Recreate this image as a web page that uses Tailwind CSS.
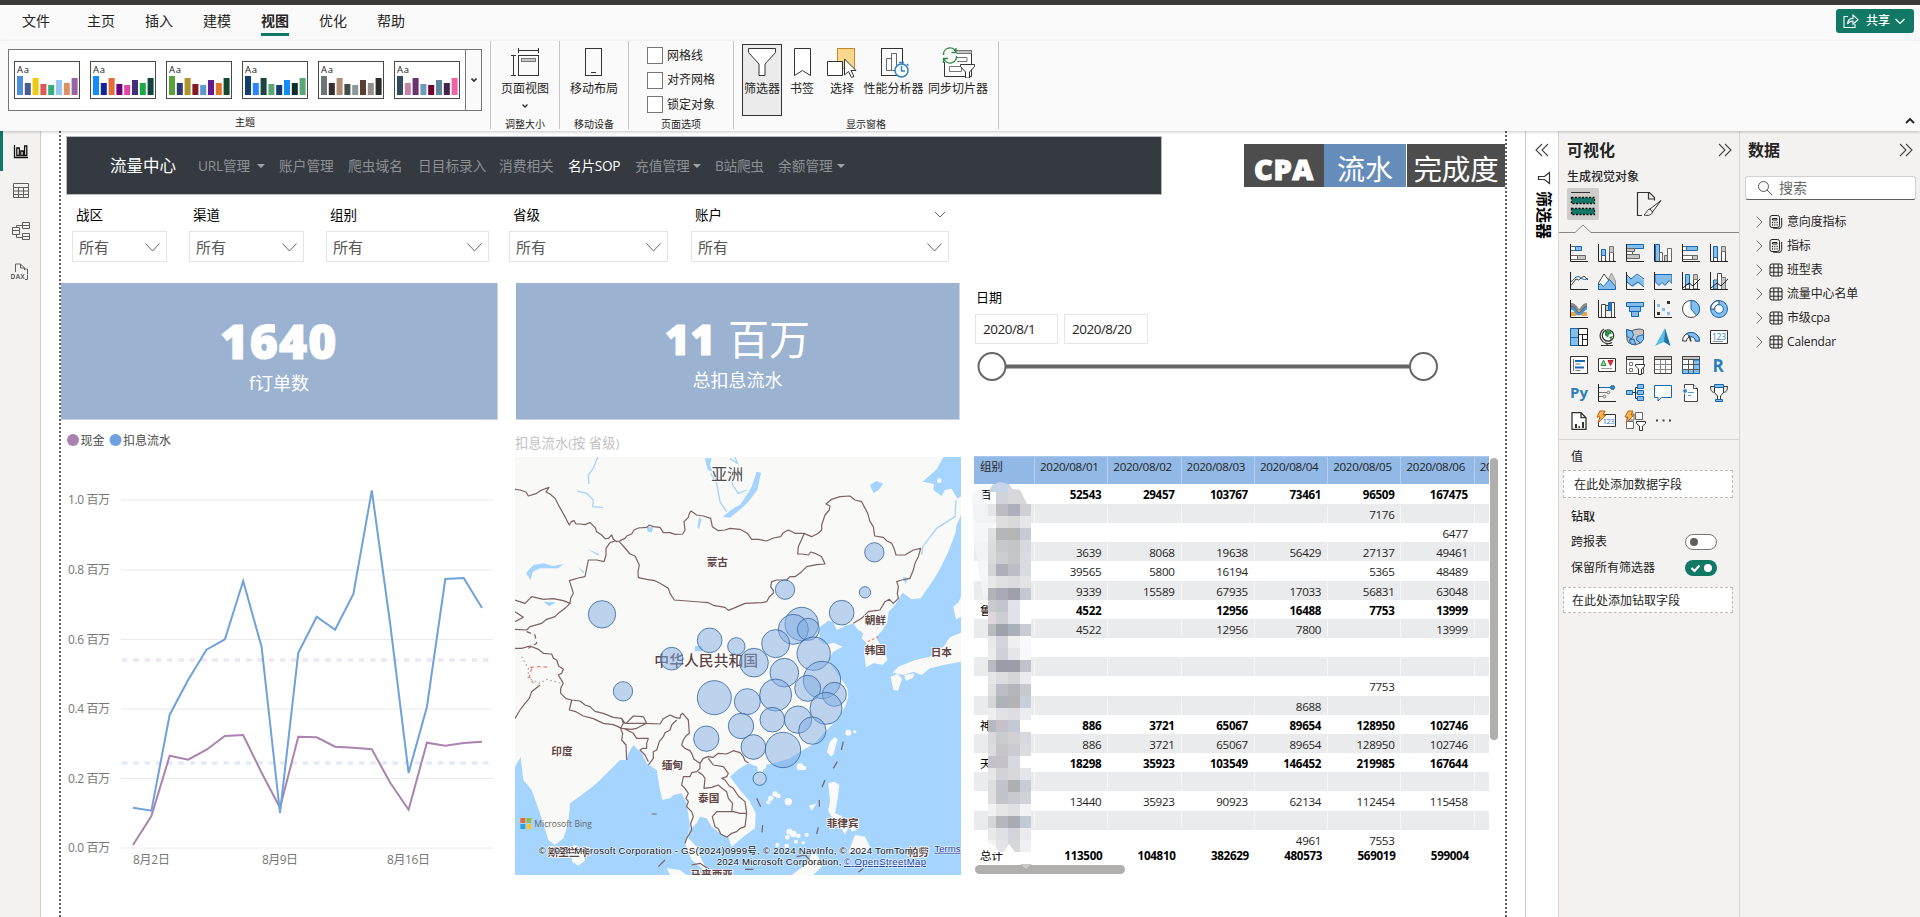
<!DOCTYPE html>
<html lang="zh-CN">
<head>
<meta charset="utf-8">
<title>流量中心</title>
<script src="https://cdn.jsdelivr.net/npm/@tailwindcss/browser@4"></script>
</head>
<body class="w-[1920px] h-[917px] overflow-hidden flex flex-col bg-white text-[#252423] font-['Open_Sans','Noto_Sans_CJK_SC',sans-serif]">
<div class="h-[5px] bg-[#3b3a38] shrink-0"></div>

<!-- menu tabs -->
<div class="h-9 shrink-0 bg-[#fafafa] flex items-start pl-[22px] pr-1.5 text-[14px] leading-[32px] whitespace-nowrap">
  <span class="w-[65px]">文件</span><span class="w-[58px]">主页</span><span class="w-[58px]">插入</span><span class="w-[58px]">建模</span>
  <span class="w-7 mr-[30px] font-bold h-[31px] leading-[32px] border-b-[3px] border-[#117865]">视图</span>
  <span class="w-[58px]">优化</span><span>帮助</span>
  <div class="ml-auto mt-1 w-[78px] h-6 rounded-[3px] bg-[#117865] text-white text-[12px] leading-6 font-medium flex items-center pl-[7px]">
    <svg class="w-4 h-4 mr-[7px]" viewBox="0 0 16 16" fill="none" stroke="#fff" stroke-width="1.1"><path d="M5 3.500H1v11h11v-3.500M4.500 11c.3-4 2-5.500 5.500-5.600V2l5 4.700-5 4.500V8C7.500 8 6 8.600 4.500 11z"/></svg>
    共享<svg class="w-2.5 h-2.5 ml-[5px]" viewBox="0 0 10 10" fill="none" stroke="#fff" stroke-width="1.2"><path d="M.5 3 5 7.500 9.500 3"/></svg>
  </div>
</div>

<!-- ribbon -->
<div class="h-[90px] shrink-0 bg-[#fafafa] flex text-[12px] leading-4 whitespace-nowrap relative z-10 shadow-[0_1px_3px_rgba(0,0,0,0.22)]">
  <div class="w-[491px] h-[88px] border-r border-[#c8c6c4] pl-2 pt-2 flex flex-col">
    <div class="w-[474px] h-[62px] border border-[#767676] bg-white flex">
      <svg id="themes" class="w-[456px] h-[60px]" viewBox="9 50 456 60"></svg>
      <div class="w-4 bg-[#fafafa] border-l border-[#767676] flex items-center justify-center"><svg class="w-1.5 h-1.5" viewBox="0 0 6 6" fill="none" stroke="#333" stroke-width="1.600"><path d="M.5 1.500 3 4l2.500-2.500"/></svg></div>
    </div>
    <div class="text-[10px] leading-3 w-[474px] text-center mt-[5px]">主题</div>
  </div>
  <div class="w-[69px] h-[88px] border-r border-[#c8c6c4] flex flex-col items-center pt-[7px]">
    <svg class="w-7 h-7 shrink-0" viewBox="0 0 28 28" fill="none" stroke="#333" stroke-width="1"><path d="M7.500 0v5M27.500 0v5M7.500 2.500h20M0 7.500h5M0 27.500h5M2.500 7.500v20"/><rect x="7.500" y="7.500" width="20" height="20"/><rect x="10.500" y="10.500" width="14" height="3" fill="#c8c6c4" stroke="#777"/></svg>
    <div class="mt-[5px]">页面视图</div>
    <svg class="w-1.5 h-1.5 mt-1.5 shrink-0" viewBox="0 0 6 6" fill="none" stroke="#333" stroke-width="1.400"><path d="M.5 1.500 3 4l2.500-2.500"/></svg>
    <div class="text-[10px] leading-3 mt-auto -mb-px">调整大小</div>
  </div>
  <div class="w-[69px] h-[88px] border-r border-[#c8c6c4] flex flex-col items-center pt-[7px]">
    <svg class="w-[17px] h-7 shrink-0 -ml-[2px]" viewBox="0 0 17 28" fill="none" stroke="#333"><rect x=".5" y=".5" width="16" height="27"/><path d="M6 24.500h5"/></svg>
    <div class="mt-[5px]">移动布局</div>
    <div class="text-[10px] leading-3 mt-auto -mb-px">移动设备</div>
  </div>
  <div class="w-[105px] h-[88px] border-r border-[#c8c6c4] flex flex-col pt-1.5 pl-[18px]">
    <div class="flex flex-col gap-[7.500px]">
      <div class="flex items-center gap-1"><i class="w-4 h-[17px] border border-[#767676] bg-white"></i>网格线</div>
      <div class="flex items-center gap-1"><i class="w-4 h-[17px] border border-[#767676] bg-white"></i>对齐网格</div>
      <div class="flex items-center gap-1"><i class="w-4 h-[17px] border border-[#767676] bg-white"></i>锁定对象</div>
    </div>
    <div class="text-[10px] leading-3 mt-auto -mb-px ml-[14px]">页面选项</div>
  </div>
  <div class="w-[265px] h-[88px] border-r border-[#c8c6c4] flex flex-col pt-[3px] pl-2">
    <div class="flex h-[72px]">
      <div class="w-10 border border-[#333] bg-[#ebebeb] flex flex-col items-center pt-[3px]">
        <svg class="w-7 h-7 shrink-0" viewBox="0 0 28 28" fill="#fff" stroke="#333"><path d="M.5.500h27v4L17 16v11.500h-6V16L.500 4.500z"/></svg><div class="mt-[5px]">筛选器</div></div>
      <div class="w-10 flex flex-col items-center pt-1">
        <svg class="w-[17px] h-7 shrink-0" viewBox="0 0 17 28" fill="#fff" stroke="#333"><path d="M.500.500h16v27l-8-5-8 5z"/></svg><div class="mt-[5px]">书签</div></div>
      <div class="w-10 flex flex-col items-center pt-1">
        <svg class="w-[30px] h-[30px] shrink-0" viewBox="0 0 30 30" fill="#fff" stroke="#333"><rect x="10.500" y=".5" width="17" height="20" fill="#f7d88c" stroke="#cf8430"/><path d="M.5 13.500h15v14H.5z"/><path d="M17.500 11v16l4-3.500 3 6 2.500-1-3-6h5z"/></svg><div class="mt-[3px]">选择</div></div>
      <div class="w-[63px] flex flex-col items-center pt-1">
        <svg class="w-[28px] h-[30px] shrink-0 ml-[3px]" viewBox="0 0 28 30" fill="#fff" stroke="#333"><rect x=".5" y=".5" width="21" height="27"/><path d="M5.500 22.500v-12h5v12zM10.500 22.500v-17h5v17z" stroke="#666"/><circle cx="20.500" cy="22.500" r="6.500" stroke="#2f86c1" stroke-width="1.500"/><path d="M20.500 18v5h3.500M18 14.500h5M26 16l1.500 1.500" fill="none" stroke="#2f86c1" stroke-width="1.500"/></svg><div class="mt-[3px]">性能分析器</div></div>
      <div class="w-[66px] flex flex-col items-center pt-[2px]">
        <svg class="w-[33px] h-8 shrink-0" viewBox="0 0 33 32" fill="#fff" stroke="#333"><path d="M2.500 16v14.500h27V4.500H12"/><path d="M13 4.500h16.500v3H15z" fill="#c8c6c4" stroke="#777"/><path d="M14 11.500h11v4H15M7.500 20.500h12v5h-12z" stroke="#777"/><path d="M18.500 18.500h14v2L27.500 26v6h-4v-6L18.500 20.500z"/><path d="M1.500 9a6.500 6.500 0 0 1 12.500-3M14 2v4.500H9.500M14.500 10A6.500 6.500 0 0 1 2 13M1.500 17v-4.500H6" fill="none" stroke="#2e8b45" stroke-width="1.400"/></svg><div class="mt-[3px]">同步切片器</div></div>
    </div>
    <div class="text-[10px] leading-3 mt-auto -mb-px ml-[104px]">显示窗格</div>
  </div>
  <svg class="w-2.5 h-2 ml-auto mr-[5px] mt-[76px]" viewBox="0 0 10 8" fill="none" stroke="#222" stroke-width="1.800"><path d="M1 6l4-4 4 4"/></svg>
</div>

<div class="flex flex-1 min-h-0">
  <!-- view switcher -->
  <div class="w-[40px] bg-[#f3f2f1] shrink-0">
    <svg class="w-[40px] h-[160px]" viewBox="0 131 40 160" fill="none" stroke="#605e5c"><rect x="0" y="131" width="3" height="40" fill="#117865" stroke="none"/>
      <g stroke="#111" stroke-width="1.300"><path d="M14.500 145v12.500H28"/><path d="M16.800 148h2.500v7.500h-2.500zM20.800 151h2.500v4.500h-2.500zM24.600 146h2.200v9.500h-2.200z" fill="#fff"/></g>
      <path d="M13.500 183.500h15v14h-15zM13.500 187.500h15M13.500 191h15M13.500 194.500h15M18.500 187v10M23.500 187v10"/>
      <path d="M22.500 222.500h7v6h-7zM22.500 233.500h7v6h-7zM12.500 227.500h7v7h-7zM22.500 225.500h-6v2M12.500 230.500h7M16.500 235v2.500h6M22.500 225.500h7M22.500 236.500h7"/>
      <path d="M15.500 272v-8h5l4 4v2M20.500 264v4h4M25 269h2.500v5"/><text x="10.500" y="279" font-size="6.500" font-weight="600" fill="#444" stroke="none" textLength="14">DAX</text><path d="M25 279.500h2.500v-5"/>
    </svg>
  </div>

  <!-- report page -->
  <div class="w-[1486px] border-x border-[#d0cecc] pl-[18px] shrink-0">
    <div class="w-[1448px] h-full border-x-2 border-dotted border-[#606060] flex flex-col">
      <div class="flex h-[63px] pt-[5px] pl-[5px]">
        <div class="w-[1096px] h-[59px] bg-[#343a40] border border-[#b9bcbf] pl-[43px] flex text-[13.7px] leading-[57px] text-[#8d9194] whitespace-nowrap">
          <span class="w-[88px] text-[16.500px] text-white">流量中心</span>
          <span class="w-[81px] h-[57px] flex items-center tracking-[-0.200px]">URL管理<i class="ml-[7px] border-x-4 border-t-4 border-x-transparent border-t-[#a0a3a5]"></i></span>
          <span class="w-[69px]">账户管理</span><span class="w-[70px]">爬虫域名</span><span class="w-[81px]">日目标录入</span><span class="w-[69px]">消费相关</span>
          <span class="w-[67px] text-white tracking-[-0.300px]">名片SOP</span>
          <span class="w-[80px] h-[57px] flex items-center">充值管理<i class="ml-[3px] border-x-4 border-t-4 border-x-transparent border-t-[#a0a3a5]"></i></span>
          <span class="w-[63px] tracking-[-0.300px]">B站爬虫</span>
          <span class="h-[57px] flex items-center">余额管理<i class="ml-[4px] border-x-4 border-t-4 border-x-transparent border-t-[#a0a3a5]"></i></span>
        </div>
        <div class="ml-[82px] mt-2 h-[43px] flex text-[28.500px] leading-[50px] text-white text-center whitespace-nowrap">
          <div class="w-20 bg-[#4d4d4d] font-extrabold text-[29px] tracking-[0.600px] [-webkit-text-stroke:1px_white]">CPA</div><div class="w-[82px] mr-px bg-[#668cba] text-[28px]">流水</div><div class="w-[98px] bg-[#4d4d4d] -tracking-[0.200px]">完成度</div>
        </div>
      </div>
      <div class="h-[89px] pt-[11px] flex text-[13.500px] leading-5 text-black whitespace-nowrap" id="slicers"></div>
      <div class="flex h-[137px] text-white text-center">
        <div class="w-[437px] bg-[#9bb3d1] border-r border-b border-[#cad6e6] pt-[26px]"><div class="text-[48px] leading-[64px] font-extrabold tracking-[1.200px] [-webkit-text-stroke:1.200px_white]">1640</div><div class="text-[18px] leading-6 -mt-[2px]">f订单数</div></div>
        <div class="w-[444px] ml-[18px] bg-[#9bb3d1] border-r border-b border-[#cad6e6] pt-[26px]"><div class="text-[42px] leading-[60px] font-extrabold tracking-[1px] [-webkit-text-stroke:1.200px_white]">11<span class="font-normal text-[41px] ml-3 tracking-normal [-webkit-text-stroke:0]">百万</span></div><div class="text-[18px] leading-6 -mt-px">总扣息流水</div></div>
        <div class="ml-[15px] text-left text-[#252423] pt-1">
          <div class="text-[13px] leading-5 text-black pl-px">日期</div>
          <div class="flex gap-[6px] mt-[7px] text-[13.500px] leading-[29px] tracking-[-0.500px]"><div class="w-[83px] h-[30px] border border-[#e6e6e6] pl-[7px]">2020/8/1</div><div class="w-[84px] h-[30px] border border-[#e6e6e6] pl-[7px]">2020/8/20</div></div>
          <svg class="w-[470px] h-9 mt-1" viewBox="975 348 470 36" fill="#fff" stroke="#666" stroke-width="2"><path d="M1006 366.500h403" stroke-width="4"/><circle cx="992" cy="366.500" r="13.500"/><circle cx="1423.500" cy="366.500" r="13.500"/></svg>
        </div>
      </div>
      <div class="flex">
        <svg id="chart" class="w-[437px] h-[490px] shrink-0" viewBox="61 420 437 490"></svg>
        <div class="ml-[17px] w-[446px] pt-[13px]">
          <div class="text-[13.300px] leading-5 text-[#c2c2c2]">扣息流水(按 省级)</div>
          <svg class="w-[446px] h-[418px] mt-1" viewBox="45 81 1338 1254">
            <rect x="45" y="81" width="1338" height="1254" fill="#f9f9f7"/>
            <g fill="#a5d5ff">
              <path d="M1330 81 1310 118 1268 155 1302 162 1300 180 1325 198 1335 180 1355 176 1372 205 1383 200V81z"/>
              <path d="M1383 255 1370 285 1366 310 1345 365 1318 420 1300 450 1262 505 1235 508 1207 488 1185 525 1166 545 1162 575 1148 600 1128 622 1138 640 1155 660 1162 690 1148 704 1120 700 1098 712 1092 665 1100 640 1085 625 1090 610 1072 598 1060 580 1035 588 1010 600 1000 575 985 572 960 590 957 630 975 645 1000 638 1028 650 1000 665 985 690 1000 715 1022 745 1042 775 1045 800 1035 830 1010 870 975 905 945 940 900 965 870 985 820 1000 795 1005 785 1035 775 1035 772 1010 745 1000 715 1018 690 1040 720 1080 750 1115 767 1150 765 1195 730 1220 695 1250 685 1222 660 1210 635 1190 620 1165 600 1160 590 1180 568 1200 565 1225 590 1250 605 1290 630 1335 575 1290 555 1240 570 1190 560 1120 545 1090 520 1095 510 1105 487 1110 480 1080 470 1020 440 1000 425 970 400 945 385 970 380 990 360 990 340 1010 290 1060 245 1095 210 1120 205 1180 190 1225 165 1245 145 1230 120 1150 95 1080 70 1050 62 980 45 1010V1335H1383z"/>
              <path d="M770 125 783 128 772 180 745 215 725 235 690 263 668 260 700 235 720 225 740 195 755 170z"/>
              <path d="M615 85h20l-5 20 8 20-15-5zM640 120l20 20-14 8zM1110 165l20-12 20 8-15 20-15 8zM440 290l20 2-5 15-12-2zM597 262l8 5-8 30-5-5zM78 430 100 405 130 400 160 408 190 402 175 415 120 415 98 425 92 450zM130 515l38 2-20 12zM262 357l36 15-3 5zM233 410l20 15-3 5zM1208 440l18 5-10 18zM585 648h22v16h-22z"/>
              <path d="M293 81 280 115 265 135 267 162M232 183 260 190 280 210 278 230 310 233M632 130 650 160 660 215 680 245M690 110 698 165 715 190 740 180M705 81 712 100 690 85M1368 210 1365 260 1310 295 1268 350 1265 375" fill="none" stroke="#a5d5ff" stroke-width="4"/>
            </g>
            <g fill="#f9f9f7">
              <path d="M1383 608 1350 622 1330 650 1290 680 1245 690 1195 710 1178 728 1210 735 1240 725 1265 735 1290 715 1330 705 1383 695zM1172 740l22-8 12 15-12 35-14-2zM1213 735l30-5-5 14-20 8zM1360 530l15-12 8-18v60l-15 8zM1003 922l10 5-12 45-8 8-12-15 8-28zM985 1060l18-5 15 10-5 40-8 45 20 8 5 22-15-8-22-15-8-15 5-30zM1020 1190l25 5-10 18zM1050 1180l20 20-15 5zM1065 1215l30 5 15 30-15 22-30-12-20 8zM950 1120l-15 22-8-15zM210 1250l18-5 22 22 5 25-20 15-18-12zM500 1315l40 5 20 15h-50zM875 1335l30-22 25-28 10-25 15 20 10 30-25 25z"/>
              <g id="isles"></g>
            </g>
            <g fill="none" stroke="#7d6060" stroke-width="3.600" stroke-linejoin="round">
              <path d="M45 178 60 180 78 186 85 198 110 190 125 180 147 172 138 186 150 192 165 205 178 230 195 260 208 285 214 275 222 272 228 282 240 282 255 284 270 278 285 292 290 305 305 315 315 326 325 325 335 315 340 328 350 335 358 333 375 325 380 318 395 312 402 300 415 294 440 292 448 285 460 290 480 292 490 308 510 308 525 313 548 312 555 300 552 275 565 262 568 250 573 243 590 255 610 258 632 265 637 290 655 302 675 300 690 295 720 298 742 310 755 328 775 328 800 333 820 324 842 320 850 308 865 300 885 310 912 310 935 320 955 310 965 300 965 285 975 255 988 240 990 228 978 222 995 208 1020 200 1050 198 1065 210 1085 215 1103 250 1110 275 1120 290 1124 318 1150 322 1160 332 1175 340 1182 355 1188 375 1215 375 1240 360 1262 355 1255 380 1245 400 1240 420 1230 445 1205 450 1190 455 1195 470 1192 490 1195 505 1180 520 1168 508 1155 515 1140 540 1125 542 1105 545 1085 565 1060 580M912 312 895 350 893 372 905 372 925 375 932 366 945 370 965 380 975 402 950 404 920 410 905 425 885 440 870 440 860 450 830 450 815 455 812 470 820 482 820 490 808 500 800 515 785 518 735 520 700 535 685 541 675 532 640 526 625 518 600 516 523 510 510 490 505 475 480 460 465 452 440 448 415 443 414 425 418 405 405 378 390 372 380 360 358 335M345 333 330 338 318 355 318 375 312 395 290 390 265 390 255 440 235 444 208 452 214 470 220 490 212 505 210 520 190 512 160 506 130 508 95 500 75 520 45 510"/>
              <path d="M210 520 195 535 175 550 165 560 140 568 125 580 90 590 80 600 45 598M45 545 70 562 45 575M45 655 65 655 90 648 115 658 130 670 155 672 160 685 170 690 176 708 190 718 185 730 175 735 190 760 182 775 182 790 198 806 215 810 240 813 255 825 270 830 285 844 310 850 340 862 365 865 375 880 440 880 480 882 490 866 510 855 525 862 540 865 542 855 548 850 565 870 568 910 558 918 550 930 545 945 555 955 570 962 575 970 582 988 600 1000 610 985 625 980 640 982 655 970 680 972 700 962 720 968 730 980 735 992 745 998M120 765 95 785 88 805 75 820 60 840 45 865M215 810 208 840 225 844 250 858 280 866 310 880 340 884 365 895 395 898 410 895 440 880 430 860 400 858 378 880M365 865 370 880 362 895 368 912 365 930 378 945 380 990M370 895 400 910 410 925 445 925 440 940 440 955 428 955 420 960 435 975 445 995M530 870 515 885 510 900 495 908 490 920 478 935 470 960 460 965 460 985 445 1005M600 1000 600 1015 590 1025 575 1028 570 1040 550 1040 545 1065 555 1075 565 1090 558 1105 565 1115 560 1130 575 1145 580 1160 572 1180 575 1200 560 1225 555 1240M625 985 640 1005 670 1010 685 1030 680 1040 665 1045 675 1050 688 1068 700 1075 715 1098 735 1115 740 1150 720 1150 700 1145 650 1145 637 1160 645 1190 655 1196 662 1212 680 1222M595 1025 608 1035 615 1045 612 1075 635 1072 655 1065 670 1078 680 1085 685 1105 698 1120 695 1145M740 1150 735 1190 720 1195 710 1205 695 1210 680 1222M575 1305 600 1300 630 1320M890 1280 915 1275 940 1300"/>
              <path d="M80 605 105 615 110 640 85 655" stroke-dasharray="14 10"/><path d="M1030 935 1024 960M1012 995 1000 1015M975 1050 966 1072M958 1110 958 1130M955 1192 950 1212M770 1105 782 1130M788 1185 786 1207M455 1152h15M495 1290 475 1310M735 1318h25M1090 1315l-15 12"/>
              <path d="M65 680 85 715 85 745 120 760 140 748 185 760" stroke="#aaa" stroke-dasharray="5 8"/><path d="M90 712 120 710 150 712M95 715 88 740 100 760" stroke="#ed8474" stroke-dasharray="12 8"/><path d="M1103 635 1140 618" stroke="#ed8474" stroke-dasharray="8 6"/>
            </g>
            <g fill="#5f4444" font-size="32" font-weight="700" stroke="#fff" stroke-width="5" paint-order="stroke" stroke-linejoin="round">
              <text x="620" y="407">蒙古</text><text x="1094" y="583">朝鲜</text><text x="1094" y="671">韩国</text><text x="1292" y="678">日本</text><text x="154" y="976">印度</text><text x="485" y="1016">缅甸</text><text x="594" y="1116">泰国</text><text x="980" y="1191">菲律宾</text><text x="143" y="1279">斯里兰卡</text><text x="571" y="1345">马来西亚</text><text x="1223" y="1279">帕劳</text>
              <text x="463" y="708" font-size="44.500" font-weight="500">中华人民共和国</text><text x="634" y="151" font-size="48" fill="#4c4c4c" font-weight="400">亚洲</text>
            </g>
            <g id="bubbles" fill="#7face4" fill-opacity=".5" stroke="#34659d" stroke-width="2.400"></g>
            <path d="M61 1164h15v15H61z" fill="#e8663c"/><path d="M79 1164h15v15H79z" fill="#8cc152"/><path d="M61 1182h15v15H61z" fill="#29a3e8"/><path d="M79 1182h15v15H79z" fill="#f7c52f"/>
            <text x="103" y="1190" font-size="27" fill="#666" textLength="173" lengthAdjust="spacingAndGlyphs">Microsoft Bing</text>
            <g font-family="Liberation Sans,Noto Sans CJK SC,sans-serif" font-size="29" fill="#111" stroke="#fff" stroke-opacity=".7" stroke-width="4" paint-order="stroke">
              <text x="116" y="1272" textLength="1162">© 2024 Microsoft Corporation - GS(2024)0999号, © 2024 NavInfo, © 2024 TomTom, ©</text>
              <text x="650" y="1305" textLength="374">2024 Microsoft Corporation,</text>
              <text x="1032" y="1305" textLength="246" fill="#1f3f9f" text-decoration="underline">© OpenStreetMap</text><text x="1303" y="1265" fill="#1f3f9f" text-decoration="underline">Terms</text>
            </g>
          </svg>
        </div>
        <!-- matrix -->
        <div class="ml-[13px] w-[525px] pt-9 relative">
          <div class="flex">
            <div class="w-[515px] overflow-hidden">
              <div id="matrix" class="w-[590px] text-[11.600px] leading-[19px] tracking-[-0.300px] text-[#252423]"></div>
            </div>
            <div class="w-2 h-[282px] ml-px mt-0.5 rounded-full bg-[#b0afad]"></div>
          </div>
          <div class="w-[150px] h-[9px] ml-px mt-[3px] rounded-full bg-[#b0afad]"></div>
          <svg id="mosaic" class="absolute left-[-4px] top-[61px] w-[68px] h-[392px]" viewBox="970 481 68 392"></svg>
        </div>
      </div>
    </div>
  </div>

  <!-- filters pane -->
  <div class="w-[33px] shrink-0 border-r border-[#d8d6d4] flex flex-col items-center pt-3">
    <svg class="w-3.5 h-3.5" viewBox="0 0 14 14" fill="none" stroke="#444" stroke-width="1.100"><path d="M7 1 1 7l6 6M13 1 7 7l6 6"/></svg>
    <svg class="w-3.5 h-3.5 mt-[14px] ml-[3px]" viewBox="0 0 14 14" fill="none" stroke="#333" stroke-width="1.200"><path d="M12.500 1.500v11L7.500 8.500H1.500v-3h6z"/></svg>
    <div class="[writing-mode:vertical-rl] [text-orientation:sideways] mt-[6px] ml-[3px] text-[16px] leading-5 font-bold text-black">筛选器</div>
  </div>

  <!-- visualizations pane -->
  <div class="w-[181px] shrink-0 bg-[#f3f2f1] border-r border-[#d8d6d4] text-[12px] leading-4 whitespace-nowrap">
    <div class="flex items-center justify-between h-[38px] pl-2 pr-[7px]"><b class="text-[16px] font-bold">可视化</b><svg class="w-3.5 h-3.5" viewBox="0 0 14 14" fill="none" stroke="#444" stroke-width="1.100"><path d="M1 1l6 6-6 6M7 1l6 6-6 6"/></svg></div>
    <div class="pl-2 font-medium">生成视觉对象</div>
    <svg class="w-[180px] h-[48px] mt-[2px] block" viewBox="1559 187 180 48" fill="none" stroke="#333">
      <rect x="1567" y="188" width="32" height="32" rx="2" fill="#cfcdcb" stroke="none"/><path d="M1571 192.500h19"/><path d="M1571.500 197.500h23v6h-23zM1571.500 208.500h23v6h-23z" fill="#117865" stroke="#111" stroke-width="1.300" stroke-dasharray="2 1.500"/>
      <path d="M1642 215.500h-4.500v-23h12l5 5v3M1648.500 193v6h6" stroke-width="1.200"/><path d="M1661 200.500 1650 209l2.500 3 8.500-11.500zM1650 209c-3 0-3 4-6 6 4 1 8 0 8.500-3" fill="#f3f2f1"/>
      <path d="M1559 232.500h16l8-7.500 8 7.500h149" stroke="#8a8886"/></svg>
    <div class="grid grid-cols-6 gap-[10px] w-[158px] ml-[11px] mt-[9px]" id="visuals">
      <svg class="w-[18px] h-[18px]" viewBox="0 0 18 18" fill="#fff" stroke="#666"><path d="M1 2.500h5v4H1M1 11.500h7v4H1"/><path d="M5.500 2.500h6v4h-6z" fill="#83beec" stroke="#1868b0"/><path d="M7.500 11.500h8v4h-8z" fill="#c8c6c4"/><path d="M.5 0v17.500H18" fill="none" stroke="#222"/></svg>
      <svg class="w-[18px] h-[18px]" viewBox="0 0 18 18" fill="#fff" stroke="#444"><path d="M3.500 17V10h4v7M11.500 17V8h4v9"/><path d="M3.500 5.500h4v6h-4z" fill="#83beec" stroke="#1868b0"/><path d="M11.500 2.500h4v6h-4z" fill="#c8c6c4" stroke="#777"/><path d="M.5 0v17.500H18" fill="none" stroke="#222"/></svg>
      <svg class="w-[18px] h-[18px]" viewBox="0 0 18 18" fill="#c8c6c4" stroke="#666"><path d="M.5.500h17v4H.5z" fill="#83beec" stroke="#1868b0"/><path d="M.5 4.500h8v3h-8zM.5 10.500h13v4H.5z"/><path d="M.5 7.500h6v3h-6z" fill="#fff"/><path d="M.5 0v17.500H18" fill="none" stroke="#222"/></svg>
      <svg class="w-[18px] h-[18px]" viewBox="0 0 18 18" fill="#fff" stroke="#666"><path d="M1.500.500h4v17h-4z" fill="#83beec" stroke="#1868b0"/><path d="M5.500 8.500h3v9h-3zM13.500 4.500h4v13h-4z"/><path d="M10.500 11.500h3v6h-3z" fill="#c8c6c4"/><path d="M.5 0v17.500H18" fill="none" stroke="#222"/></svg>
      <svg class="w-[18px] h-[18px]" viewBox="0 0 18 18" fill="#fff" stroke="#666"><path d="M1 2.500h4v4H1M1 11.500h10v4H1"/><path d="M4.500 2.500h11v4h-11z" fill="#83beec" stroke="#1868b0"/><path d="M10.500 11.500h5v4h-5z" fill="#c8c6c4"/><path d="M.5 0v17.500H18" fill="none" stroke="#222"/></svg>
      <svg class="w-[18px] h-[18px]" viewBox="0 0 18 18" fill="#fff" stroke="#444"><path d="M3.500 13h4v4M11.500 17V7h4v10M3.500 17v-4"/><path d="M3.500 2.500h4v11h-4z" fill="#83beec" stroke="#1868b0"/><path d="M11.500 2.500h4v5h-4z" fill="#c8c6c4" stroke="#777"/><path d="M.5 0v17.500H18" fill="none" stroke="#222"/></svg>

      <svg class="w-[18px] h-[18px]" viewBox="0 0 18 18" fill="none" stroke="#222"><path d="M1 9.500c3-1 4-5 7-5s4 5 10 2" stroke="#1868b0"/><path d="M1 13.500 6 7l2.500 1L14 4l4 4" stroke="#444"/><path d="M.5 0v17.500H18"/></svg>
      <svg class="w-[18px] h-[18px]" viewBox="0 0 18 18" stroke="#444"><path d="M9 10l4.500-9 4 8v8H9z" fill="#c8c6c4" stroke="#999"/><path d="M.500 17v-6L6 2l6 8v7z" fill="#fff"/><path d="M.5 17.500v-4l2-2 3 3 6-7 6 7v3z" fill="#83beec" stroke="#1868b0"/></svg>
      <svg class="w-[18px] h-[18px]" viewBox="0 0 18 18" fill="none" stroke="#222"><path d="M1 4l4 3 6-4 7 5v7l-6-4-5 4-6-5z" fill="#83beec" stroke="none"/><path d="M1 3l4 4 6-5 7 5M1 10l5 4 6-4 6 5" stroke="#1868b0"/><path d="M.5 0v17.500H18"/></svg>
      <svg class="w-[18px] h-[18px]" viewBox="0 0 18 18" fill="none" stroke="#222"><path d="M1 2.500h17v9l-3-3-4 5-3-3-3 3-4-4z" fill="#83beec" stroke="#1868b0"/><path d="M.5 0v17.500H18"/></svg>
      <svg class="w-[18px] h-[18px]" viewBox="0 0 18 18" fill="#fff" stroke="#444"><path d="M3.500 10h4v7h-4zM11.500 7h4v10h-4z"/><path d="M3.500 2.500h4v10h-4z" fill="#83beec" stroke="#1868b0"/><path d="M11.500 2.500h4v5h-4z" fill="#c8c6c4" stroke="#777"/><path d="M.5 0v17.500H18M1 16l6-5 4 3 7-7" fill="none" stroke="#222"/></svg>
      <svg class="w-[18px] h-[18px]" viewBox="0 0 18 18" fill="#fff" stroke="#444"><path d="M3.500 8h4v9h-4z" fill="#83beec" stroke="#1868b0"/><path d="M7.500 1.500h4v16h-4z"/><path d="M11.500 5.500h4v12h-4z" fill="#c8c6c4" stroke="#777"/><path d="M.5 0v17.500H18M1 16l6-5 4 3 7-7" fill="none" stroke="#222"/></svg>

      <svg class="w-[18px] h-[18px]" viewBox="0 0 18 18" fill="none" stroke="#222"><path d="M1 5c5 0 5 6 8 6s4-6 8-6" stroke="#888" stroke-width="4"/><path d="M1 14h4l4-2 4 2h4" stroke="#eaa24c" stroke-width="4"/><path d="M1 8c5 0 5 6 8 6s4-6 8-6" stroke="#4398dc" stroke-width="3"/><path d="M1 6.500c5 0 5 6 8 6s4-6 8-6" stroke="#555" stroke-width=".8"/><path d="M.5 0v17.500H18"/></svg>
      <svg class="w-[18px] h-[18px]" viewBox="0 0 18 18" fill="#fff" stroke="#444"><path d="M3.500 4.500h4v13h-4zM13.500 2.500h3v15h-3z"/><path d="M7.500 5.500h3v5h-3z" fill="#c8c6c4"/><path d="M10.500 2.500h3v8h-3z" fill="#1e7bc4" stroke="#1868b0"/><path d="M.5 0v17.500H18" fill="none" stroke="#222"/></svg>
      <svg class="w-[18px] h-[18px]" viewBox="0 0 18 18" fill="#83beec" stroke="#1868b0"><path d="M.5 2.500h17v4H.5zM3.500 6.500h11v5h-11zM5.500 11.500h7v5h-7z"/></svg>
      <svg class="w-[18px] h-[18px]" viewBox="0 0 18 18"><path d="M3 4h3v3H3zM8 8h3v3H8zM13 12h3v3h-3z" fill="#83beec"/><path d="M13 1h3v3h-3zM3 12h3v3H3z" fill="#333"/><path d="M.5 0v17.500H18" fill="none" stroke="#222"/></svg>
      <svg class="w-[18px] h-[18px]" viewBox="0 0 18 18" fill="#fff" stroke="#444"><circle cx="9" cy="9" r="8.500"/><path d="M9 .500V9l5.500 6.500A8.500 8.500 0 0 0 9 .500z" fill="#83beec" stroke="#1868b0"/></svg>
      <svg class="w-[18px] h-[18px]" viewBox="0 0 18 18" fill="none" stroke="#1868b0"><circle cx="9" cy="9" r="6.200" stroke="#83beec" stroke-width="4.500"/><path d="M9 .500A8.500 8.500 0 0 0 .500 9H4.500A4.500 4.500 0 0 1 9 4.500z" fill="#fff" stroke="#444"/><circle cx="9" cy="9" r="8.500"/><circle cx="9" cy="9" r="4.300" fill="#fff"/></svg>

      <svg class="w-[18px] h-[18px]" viewBox="0 0 18 18" fill="#fff" stroke="#222"><path d="M.5.500h17v17H.5z"/><path d="M.5.500h8v9h-8zM.5 9.500h8v8h-8z" fill="#83beec" stroke="#1868b0"/><path d="M8.500 6.500h9M8.500.500v17M12.500 6.500v11M12.500 11.500h5" fill="none"/></svg>
      <svg class="w-[18px] h-[18px]" viewBox="0 0 18 18" fill="none" stroke="#333" stroke-width="1.200"><circle cx="10" cy="7.500" r="5.700" fill="#fff"/><path d="M7 3l5-.5 2 3-3 1-1 3-3-2zM11 9l4-1-2 4z" fill="#2b9348" stroke="none"/><path d="M6 1a7.800 7.800 0 0 0 8 13.500M9 15v2.500M3 17.500h12"/></svg>
      <svg class="w-[18px] h-[18px]" viewBox="0 0 18 18" stroke="#555"><path d="M.5 1.500 6 3l3-1.500 5-.5 3.500 1v9l-3 4-5.500 2-6-2L1 12z" fill="#c8c6c4"/><path d="M.5 1.500 6 3 7.500 7l-2 4L1 8.500zM11 8.500l6.500-2v5l-3 3.500-4-3zM3 12l5-1 1.500 5-4 .5z" fill="#83beec" stroke="#1868b0"/></svg>
      <svg class="w-[18px] h-[18px]" viewBox="0 0 18 18"><path d="M11 0 1 18l9-4z" fill="#59bfe6"/><path d="M11 0l5.500 18-6.500-4z" fill="#1876a8"/></svg>
      <svg class="w-[18px] h-[18px]" viewBox="0 0 18 18" stroke="#333"><path d="M.500 13a8.500 8.500 0 0 1 17 0h-4a4.500 4.500 0 0 0-9 0z" fill="#fff"/><path d="M5 5.500a8.500 8.500 0 0 1 12.500 7.500h-4a4.500 4.500 0 0 0-6-4z" fill="#83beec" stroke="#1868b0"/><path d="M9 13.500 7 7.500" stroke-width="1.500"/></svg>
      <svg class="w-[18px] h-[18px]" viewBox="0 0 18 18" fill="#fff" stroke="#333"><path d="M.5 2.500h17v13H.5z"/><text x="2" y="11.500" font-size="8.500" fill="#2681c4" stroke="none" textLength="14">123</text><path d="M3 13.500h10" stroke="#999"/></svg>

      <svg class="w-[18px] h-[18px]" viewBox="0 0 18 18" fill="#fff" stroke="#333"><path d="M.5.500h17v17H.5z"/><path d="M3.500 3v12M5.500 8h5M5.500 14.500h5" stroke="#777"/><path d="M5 5h10M5 11.500h9" stroke="#1868b0" stroke-width="2"/></svg>
      <svg class="w-[18px] h-[18px]" viewBox="0 0 18 18" fill="#fff" stroke="#333"><path d="M.5 2.500h17v13H.5z"/><path d="M3 9.500 5.500 4 8 9.500z" fill="#8fd19e" stroke="#2b9348"/><path d="M10 4.500h5l-2.500 5z" fill="#e33" stroke="#b22"/><path d="M3 12.500h11" stroke="#999"/></svg>
      <svg class="w-[18px] h-[18px] overflow-visible" viewBox="0 0 18 18" fill="#fff" stroke="#333"><path d="M.5.500h17v17H.5z" stroke="#555"/><path d="M.5.500h17v3H.5z" fill="#c8c6c4"/><path d="M3.500 6.500h3v3h-3zM3.500 12.500h3v3h-3z" stroke="#777"/><path d="M9.500 8.500h9v2L15.500 13v5.500h-3V13l-3-3z"/></svg>
      <svg class="w-[18px] h-[18px]" viewBox="0 0 18 18" fill="#fff" stroke="#444"><path d="M.5.500h17v17H.5z"/><path d="M.5.500h17v3H.5z" fill="#c8c6c4"/><path d="M1 8.500h16M1 13.500h16M6.500 4v13M11.500 4v13" stroke="#888"/></svg>
      <svg class="w-[18px] h-[18px]" viewBox="0 0 18 18" fill="#fff" stroke="#444"><path d="M.5.500h17v17H.5z"/><path d="M.5.500h17v3H.5z" fill="#c8c6c4"/><path d="M11.500 4h6v13.500H.5v-4h11z" fill="#83beec" stroke="#1868b0"/><path d="M1 8.500h16M1 13.500h16M6.500 4v13M11.500 4v13" stroke="#555"/></svg>
      <b class="w-[18px] h-[18px] text-[17px] leading-[19px] text-[#2a7fb8] text-center -ml-px">R</b>

      <b class="w-[18px] h-[18px] text-[15px] leading-[16px] text-[#2a7fb8]">Py</b>
      <svg class="w-[18px] h-[18px]" viewBox="0 0 18 18" fill="none" stroke="#777"><path d="M1 3.500h11" stroke="#1868b0"/><circle cx="14.500" cy="3.500" r="2" fill="#2f86c1" stroke="#1868b0" /><path d="M1 8.500h8M1 12.500h4"/><circle cx="10.500" cy="8.500" r="1.300"/><circle cx="6.500" cy="12.500" r="1.300"/><path d="M.5 0v17.500H18" stroke="#222"/></svg>
      <svg class="w-[18px] h-[18px]" viewBox="0 0 18 18" fill="#83beec" stroke="#1868b0"><path d="M6 8.500h3M11 3.500H9.500v11H11M9 9h3" fill="none" stroke="#333"/><path d="M.5 6.500h6v4h-6zM11.500.5h6v4h-6zM11.500 6.500h6v4h-6zM11.500 12.500h6v4h-6z"/></svg>
      <svg class="w-[18px] h-[18px]" viewBox="0 0 18 18" fill="#fff" stroke="#1868b0"><path d="M.5 1.500h17v12H7.500l-3.500 3.500v-3.500H.5z"/></svg>
      <svg class="w-[18px] h-[18px]" viewBox="0 0 18 18" fill="#fff" stroke="#444"><path d="M2.500.500h9l4 4v13h-13z"/><path d="M11.500.500v4h4" /><circle cx="3" cy="7" r="2.400" fill="#2f86c1" stroke="#f3f2f1"/><path d="M6 8.500h6M6 11.500h3" stroke="#4b9fd8"/></svg>
      <svg class="w-[18px] h-[18px]" viewBox="0 0 18 18" fill="#fff" stroke="#333"><path d="M4.500 2.500h-4c0 5 2 6 5 6M13.500 2.500h4c0 5-2 6-5 6" fill="none"/><path d="M4.500 1.500h9v7l-3 3.500v4h-3v-4l-3-3.500z"/><path d="M4.500.500h9v3h-9zM5.500 15.500h7v2h-7z" fill="#83beec" stroke="#1868b0"/></svg>

      <svg class="w-[18px] h-[18px]" viewBox="0 0 18 18" fill="#fff" stroke="#333" stroke-width="1.300"><path d="M2 .700h9l5 5v11.700H2zM11 .700v5h5"/><path d="M5 12h2v4H5zM8.500 14h1.500v2H8.500zM12 10h2v6h-2z" fill="#333" stroke="none"/></svg>
      <svg class="w-[18px] h-[18px] overflow-visible" viewBox="0 0 18 18" fill="#fff" stroke="#333"><path d="M2 2.500h15.500v12H.5V9"/><text x="4.500" y="11.500" font-size="8" fill="#2681c4" stroke="none" textLength="12">123</text><path d="M2 -1h5L5 3h3L0 11l2-6H-1z" fill="#f7b54a" stroke="#b5651d"/></svg>
      <svg class="w-[18px] h-[18px] overflow-visible" viewBox="0 0 18 18" fill="#fff" stroke="#666"><path d="M9.500.500h7v7h-7zM.500 9.500h7v7h-7zM1 2h7v6H1z"/><path d="M2 -1h5L5 3h3L0 11l2-6H-1z" fill="#f7b54a" stroke="#b5651d"/><path d="M10.500 9.500h9v2L16.500 14v4.500h-3V14l-3-2.500z" stroke="#333"/></svg>
      <svg class="w-[18px] h-[18px]" viewBox="0 0 18 18" fill="#444"><path d="M2 7.500h2v2H2zM8.500 7.500h2v2h-2zM15 7.500h2v2h-2z"/></svg>
    </div>
    <div class="border-t border-[#d8d6d4] mt-[9px] pt-[9px]">
      <div class="pl-3">值</div>
      <div class="ml-1 mt-[5px] w-[170px] h-7 border border-dashed border-[#bdbbb9] bg-white leading-[28px] pl-[10px]">在此处添加数据字段</div>
      <div class="pl-3 mt-[11px] font-medium">钻取</div>
      <div class="pl-3 pr-[22px] mt-[9px] flex items-center justify-between">跨报表<i class="w-8 h-4 rounded-full border border-[#767676] bg-white flex items-center pl-1"><i class="w-2 h-2 rounded-full bg-[#605e5c]"></i></i></div>
      <div class="pl-3 pr-[22px] mt-[10px] flex items-center justify-between">保留所有筛选器<svg class="w-8 h-4" viewBox="0 0 32 16"><rect width="32" height="16" rx="8" fill="#117865"/><circle cx="23" cy="8" r="4" fill="#fff"/><path d="M6.500 8l3 3 5-5.500" fill="none" stroke="#fff" stroke-width="2.200"/></svg></div>
      <div class="ml-1 mt-[11px] w-[170px] h-[26px] border border-dashed border-[#bdbbb9] bg-white leading-[26px] pl-2">在此处添加钻取字段</div>
    </div>
  </div>

  <!-- data pane -->
  <div class="flex-1 bg-[#f3f2f1] text-[12px] leading-6 whitespace-nowrap">
    <div class="flex items-center justify-between h-[38px] pl-2 pr-[7px]"><b class="text-[16px] font-bold">数据</b><svg class="w-3.5 h-3.5" viewBox="0 0 14 14" fill="none" stroke="#444" stroke-width="1.100"><path d="M1 1l6 6-6 6M7 1l6 6-6 6"/></svg></div>
    <div class="w-[171px] h-6 ml-[5px] mt-[7px] rounded-[3px] border border-[#d1d1d1] border-b-[#605e5c] bg-white flex items-center pl-3 text-[14px] text-[#666]"><svg class="w-3.5 h-3.5 mr-[7px]" viewBox="0 0 14 14" fill="none" stroke="#555"><circle cx="5.500" cy="5.500" r="5"/><path d="M9 9l5 5"/></svg>搜索</div>
    <div class="mt-[10px]" id="fields"></div>
  </div>
</div>

<script>
const $ = id => document.getElementById(id);
const palettes = [
 ['#4f8edc','#4a5c8c','#f2c811','#dc5b57','#33ae81','#95c8f0','#dd915f','#9a64a0'],
 ['#118dff','#12239e','#e66c37','#6b007b','#e044a7','#44307a','#1aab40','#15433f'],
 ['#59a33a','#2f3a73','#b1922b','#7f1a28','#5c97d0','#641a8c','#e3742a','#14492f'],
 ['#123f6d','#2a86ff','#1b4540','#5ba577','#103c6d','#118dff','#102e2c','#5ba577'],
 ['#6a7677','#3a2e2c','#b18e74','#454d4c','#8a9a9b','#5b3f35','#938f8b','#2a2e2c'],
 ['#324a5e','#c583ab','#6b3272','#6e9bb8','#6d0330','#5f869d','#41254a','#ee62aa']];
const barH = [19,12,17,11,10,15,12,17];
$('themes').innerHTML = palettes.map((p,i) => {
  const x = 14 + i*76;
  return `<rect x="${x+.5}" y="61.5" width="65" height="37" fill="#fff" stroke="#484848"/><text x="${x+3}" y="72.500" font-size="9.500" letter-spacing="0.800" fill="#222">Aa</text>` +
    p.map((c,j) => `<rect x="${x+3+j*7.800}" y="${95-barH[j]}" width="6" height="${barH[j]}" fill="${c}"/>`).join('');
}).join('');

const slicers = [['战区',11,95],['渠道',22,115],['组别',22,163],['省级',20,159],['账户',23,258]];
$('slicers').innerHTML = slicers.map(([t,ml,w],i) => `<div style="margin-left:${ml}px;width:${w}px"><div class="flex items-center justify-between pl-1 pr-1">${t}${i==4?'<svg class="w-2.5 h-2.5" viewBox="0 0 10 10" fill="none" stroke="#666"><path d="M0 2l5 5 5-5"/></svg>':''}</div><div class="mt-1.5 h-[31px] pt-px border border-[#e4e4e4] flex items-center justify-between pl-1.5 pr-1.5 text-[15px] text-[#555]">所有<svg class="w-[15px] h-[9px]" viewBox="0 0 15 9" fill="none" stroke="#666"><path d="M.5.500l7 7.500 7-7.500"/></svg></div></div>`).join('');

const blue = [807.7,810.7,714.7,680,649.7,639.3,581,647,813,652.7,616.7,629.7,594,490.500,624,773,707,579,578,608];
const purple = [845,816,755.7,759.7,749.7,736,735,772.7,807.7,736.7,737.3,746.7,747.7,749.3,782.7,809.7,742.7,745.7,743,741.7];
const pts = a => a.map((y,i) => (133+i*18.37).toFixed(1)+','+y).join(' ');
$('chart').innerHTML = `<g font-size="12" fill="#4a4a4a"><circle cx="73" cy="440" r="6" fill="#ad80b4"/><text x="80.500" y="444.500">现金</text><circle cx="115.500" cy="440" r="6" fill="#6fa1de"/><text x="123" y="444.500">扣息流水</text></g>` +
 [500,570,639.500,709,778.500,848].map((y,i) => `<path d="M121 ${y}H493" stroke="#eaeaea"/><text x="68" y="${y+4}" font-size="12" fill="#777" textLength="42">${(1-i*.2).toFixed(1)} 百万</text>`).join('') +
 `<path d="M122 660H493" stroke="#eee6f0" stroke-width="3.500" stroke-dasharray="5.500 5.780"/><path d="M122 763H493" stroke="#e2ecf8" stroke-width="3.500" stroke-dasharray="5.500 5.780"/>
 <polyline points="${pts(purple)}" fill="none" stroke="#ab82b0" stroke-width="2"/><polyline points="${pts(blue)}" fill="none" stroke="#6fa1da" stroke-width="2"/>
 <g font-size="12" fill="#777"><text x="133" y="864" textLength="37">8月2日</text><text x="262" y="864" textLength="36">8月9日</text><text x="387" y="864" textLength="43">8月16日</text></g>`;

const bubbles = [[306,553,41],[1123,367,29],[855,479,29],[1095,487,17],[1025,548,37],[905,582,50],[880,598,45],[925,598,33],[629,631,37],[709,649,26],[827,641,42],[941,671,50],[515,686,34],[762,698,43],[853,728,43],[966,750,56],[369,784,29],[643,803,51],[742,815,39],[827,795,48],[923,775,39],[1003,793,36],[978,835,48],[723,888,38],[817,869,37],[894,869,41],[937,902,41],[619,926,38],[760,951,37],[849,960,53],[779,1046,20]];
$('bubbles').innerHTML = bubbles.map(([x,y,r]) => `<circle cx="${x}" cy="${y}" r="${r}"/>`).join('');
$('isles').innerHTML = [[1045,908,9],[1064,905,5],[900,1010,10],[912,1014,7],[825,1092,8],[835,1098,7],[812,1105,8],[805,1117,6],[865,1115,11],[868,1205,9],[880,1212,10],[895,1218,7],[862,1222,7],[920,1214,6],[832,1245,6],[860,1248,7],[888,1235,6],[910,1238,5],[779,1046,19],[790,1008,9],[1318,152,7]].map(([x,y,r]) => `<circle cx="${x}" cy="${y}" r="${r}"/>`).join('');

const rows = [
 ['B','百','52543','29457','103767','73461','96509','167475'],
 ['','','','','','','7176',''],
 ['','','','','','','','6477'],
 ['','','3639','8068','19638','56429','27137','49461'],
 ['','','39565','5800','16194','','5365','48489'],
 ['','','9339','15589','67935','17033','56831','63048'],
 ['B','鲁','4522','','12956','16488','7753','13999'],
 ['','','4522','','12956','7800','','13999'],
 ['','','','','','','',''],
 ['','','','','','','',''],
 ['','','','','','','7753',''],
 ['','','','','','8688','',''],
 ['B','神','886','3721','65067','89654','128950','102746'],
 ['','','886','3721','65067','89654','128950','102746'],
 ['B','天','18298','35923','103549','146452','219985','167644'],
 ['','','','','','','',''],
 ['','','13440','35923','90923','62134','112454','115458'],
 ['','','','','','','',''],
 ['','','','','','4961','7553','']];
const head = ['2020/08/01','2020/08/02','2020/08/03','2020/08/04','2020/08/05','2020/08/06','2020/08/07'];
let m = '<div class="flex h-7 bg-[#92b8e5] border-t border-[#a9c8ee]"><div class="w-[61px] pl-1.5 border-r border-[#b3cdee]">组别</div>' + head.map(h => `<div class="w-[73.300px] shrink-0 pl-[5px] border-r border-[#b3cdee]">${h}</div>`).join('') + '</div>';
rows.forEach((r,i) => {
  m += `<div class="flex ${i==0?'h-5':'h-[19.160px]'} pt-[1px] ${i%2?'bg-[#eaebed]':'bg-white'} ${r[0]?'font-bold text-black':''}"><div class="w-[61px] h-full pl-1.5 font-normal border-r border-white/60">${r[1]}</div>` + r.slice(2).map(v => `<div class="w-[73.300px] shrink-0 text-right pr-[6px] border-r border-white/60">${v}</div>`).join('') + '</div>';
});
m += '<div class="flex h-[14px] leading-[15px] -mt-px font-bold text-black"><div class="w-[61px] pl-1.5 font-normal">总计</div>' + ['113500','104810','382629','480573','569019','599004'].map(v => `<div class="w-[73.300px] shrink-0 text-right pr-[6px]">${v}</div>`).join('') + '</div>';
$('matrix').innerHTML = m;

const cells = `0,d0d4d9,d8d8da,0 e6e6e8,bcbcc2,adb0ba,cfcfd4 0,dedede,d9d9d9,e6e6ea e0e0e0,b4b6b9,b5b5b3,c8cad4 dcdcdc,c6c9cc,c4c5c8,d8d9de dadada,cbcdd0,c5c6ca,dadbe0 d4d4d6,adafb9,bcbdc5,dadbe0 e8e8e8,e0e0e3,dcdcdf,e3e3e6 b2b2b8,a9a9b5,9fa0a9,c4c9d0 c9c8cc,c2c6cc,e2e3e8,ffffff ddd6dc,cdced4,e0e2e8,ffffff b8bcc0,9ea3ab,a9b0b9,c9ccd2 e8e8e8,d4d5da,f0f0f2,fafafc ececec,d0d1d6,e6e6ea,f8f8fa b9b9c2,9b9ca6,9c9da9,c0c1c9 e6e6e6,dddde0,d6d6da,ececf0 e0e0e0,bcbec5,b4b6bc,c8c9d0 d6d6d6,adb1b8,b3b3b5,c8cfd8 eeeeee,e2e2e5,dedee2,ebecf1 b4bac3,c6c1c8,c3cad3,0 d9d9db,c8cccd,d0d0d5,d8d9df dcdcde,c5c5ca,cbcbd1,dcdce0 c5c1ca,c5c2ca,d6dae0,0 e6e6e6,d2d2d6,d8d8dc,e4e5ea dedede,c3c4c9,adafb3,c8cdd5 e0dde0,c3c4ca,c9cad0,d2d2da f2f2f2,e6e6e6,e0e0e2,f3f3f5 d6d6d6,b4b7be,a9abb2,c3cad3 e8e8e8,dfe0e4,d4d5da,ebebee f2f2f2,e4e4e8,d6d7db,f0f0f2`.split(' ');
let mo = '<path d="M989 492 992 485 1000 482 1009 484 1014 492z" fill="#c6d6e8"/><path d="M972 494l8-5 3 2 1 12 8 5 4 8-6 30 2 40-8 16-10-60z" fill="#f2f4f6" fill-opacity=".85"/><path d="M1008 488l12 2 7 14h-19z" fill="#d8d8da"/>';
cells.forEach((row,k) => row.split(',').forEach((c,j) => {
  if (c === '0') return;
  const x = [988,996,1008,1020][j], w = [8,12,12,11][j];
  mo += `<rect x="${x}" y="${492+k*12}" width="${w}" height="12" fill="#${c}"/>`;
}));
mo += '<path d="M988 852v-10l6 4 6 6zM1004 852l5-8 6 8z" fill="#fff"/><path d="M1020 864h12l-6 5z" fill="#c8c8c8"/>';
$('mosaic').innerHTML = mo;

const calc = '<path d="M3 .5h5.500a2 2 0 0 1 2 2v8a2 2 0 0 1-2 2H3a2 2 0 0 1-2-2v-8a2 2 0 0 1 2-2zM3.500 3.500H8v1.500H3.500zM12.700 3v7.500a3.500 3.500 0 0 1-3.500 3.300H4"/><path d="M3 7.500h1M5.300 7.500h1M7.600 7.500h1M3 10h1M5.300 10h1M7.600 10h1" stroke-width="1.300"/>';
const tbl = '<path d="M3 1h8a2 2 0 0 1 2 2v8a2 2 0 0 1-2 2H3a2 2 0 0 1-2-2V3a2 2 0 0 1 2-2zM1 4.800h12M1 9.200h12M4.800 1v12M9.200 1v12"/>';
$('fields').innerHTML = ['意向度指标','指标','班型表','流量中心名单','市级cpa','Calendar'].map((t,i) => `<div class="flex items-center h-6 pl-4"><svg class="w-[7px] h-3 mr-[6px]" viewBox="0 0 7 12" fill="none" stroke="#777"><path d="M.5.500 6 6 .500 11.500"/></svg><svg class="w-3.5 h-3.5 mr-1" viewBox="0 0 14 14" fill="none" stroke="#222">${i<2?calc:tbl}</svg><span class="tracking-[-0.150px]">${t}</span></div>`).join('');
</script>
</body>
</html>
